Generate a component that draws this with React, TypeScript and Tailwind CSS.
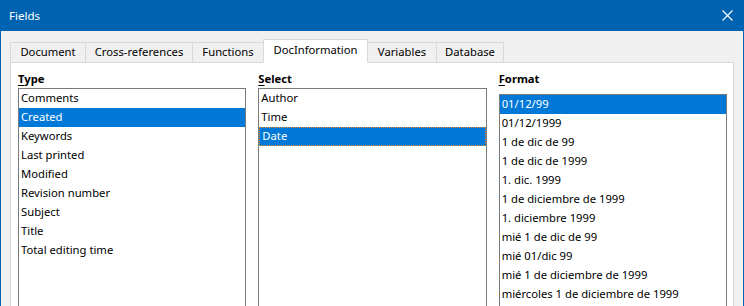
import { useState } from 'react';

const tabs = [
	{ label: 'Document', w: 'w-[76px]' },
	{ label: 'Cross-references', w: 'w-[108px]' },
	{ label: 'Functions', w: 'w-[72px]' },
	{ label: 'DocInformation', w: 'w-[105px]' },
	{ label: 'Variables', w: 'w-[70px]' },
	{ label: 'Database', w: 'w-[68px]' },
];

const types = [
	'Comments',
	'Created',
	'Keywords',
	'Last printed',
	'Modified',
	'Revision number',
	'Subject',
	'Title',
	'Total editing time',
];

const selects = ['Author', 'Time', 'Date'];

const formats = [
	'01/12/99',
	'01/12/1999',
	'1 de dic de 99',
	'1 de dic de 1999',
	'1. dic. 1999',
	'1 de diciembre de 1999',
	'1. diciembre 1999',
	'mié 1 de dic de 99',
	'mié 01/dic 99',
	'mié 1 de diciembre de 1999',
	'miércoles 1 de diciembre de 1999',
];

export default function App() {
	const [activeTab] = useState('DocInformation');

	return (
		<div className="w-[744px] h-[306px] overflow-hidden bg-[#f0f0f0] border-x border-[#0063b1] font-['Noto_Sans',sans-serif] text-[11.25px] text-black">
			<div className="h-[31px] bg-[#0063b1] flex items-center justify-between pl-[8px] pr-[10px] text-white">
				<span className="leading-none text-[11.5px]">Fields</span>
				<svg width="11" height="11" viewBox="0 0 11 11">
					<path d="M0.5 0.5 L10.5 10.5 M10.5 0.5 L0.5 10.5" stroke="white" strokeWidth="1.1" />
				</svg>
			</div>

			<div className="flex items-end pl-[9px] h-[32px] -mb-px relative z-10">
				{tabs.map((t, i) => {
					const active = t.label === activeTab;
					return (
						<div
							key={t.label}
							className={`${t.w} ${i > 0 ? '-ml-px' : ''} flex items-center justify-center border border-[#d9d9d9] ${
								active
									? 'h-[24px] bg-white border-b-white relative z-10 pb-[1px]'
									: 'h-[20px] mb-px bg-[#f0f0f0] border-b-0'
							}`}
						>
							{t.label}
						</div>
					);
				})}
			</div>

			<div className="ml-[9px] w-[724px] h-[260px] bg-white border border-[#d9d9d9] pl-[7px] pr-[6px] pt-[8px]">
				<div className="grid grid-cols-3 gap-x-[12px]">
					<Column label="Type" items={types} selected="Created" />
					<Column label="Select" items={selects} selected="Date" focused />
					<Column label="Format" items={formats} selected="01/12/99" offset />
				</div>
			</div>
		</div>
	);
}

function Column(props: IColumnProps) {
	return (
		<div className="flex flex-col">
			<div className="font-bold leading-[15px]">
				<span className="underline underline-offset-[2px]">{props.label[0]}</span>
				{props.label.slice(1)}
			</div>
			<div
				className={`${props.offset ? 'mt-[8px]' : 'mt-[2px]'} h-[260px] border border-[#7a7a7a] bg-white`}
			>
				{props.items.map((item) => {
					const sel = item === props.selected;
					return (
						<div
							key={item}
							className={`h-[19px] flex items-center pl-[2px] whitespace-nowrap ${
								sel ? 'bg-[#0078d7] text-white' : ''
							} ${sel && props.focused ? 'border border-dotted border-[#f08a24] pl-[1px]' : ''}`}
						>
							{item}
						</div>
					);
				})}
			</div>
		</div>
	);
}

interface IColumnProps {
	label: string;
	items: string[];
	selected: string;
	focused?: boolean;
	offset?: boolean;
}
